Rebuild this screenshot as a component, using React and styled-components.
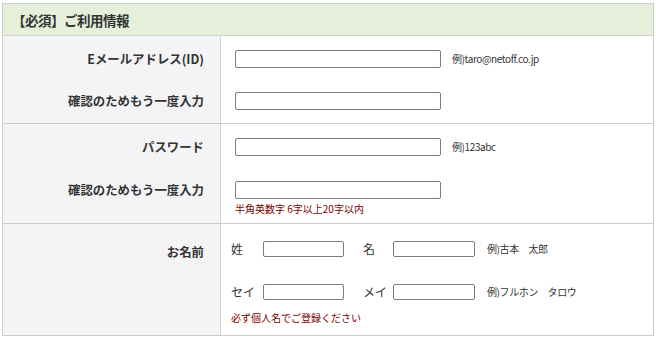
import React from "react";
import styled, { createGlobalStyle } from "styled-components";

const Global = createGlobalStyle`
  html, body { margin: 0; padding: 0; background: #fff; }
  body { font-family: "Noto Sans CJK JP", "Noto Sans", sans-serif; color: #333; }
  * { box-sizing: border-box; }
`;

const Table = styled.div`
  width: 652px;
  margin: 3px 0 0 2px;
  border: 1px solid #cccccc;
  border-bottom: none;
`;

const Header = styled.div`
  height: 32px;
  background: #e5efda;
  border-bottom: 1px solid #cfd6c8;
  padding-left: 9px;
  display: flex;
  align-items: center;
  font-size: 13.5px;
  font-weight: bold;
  color: #333;
  letter-spacing: -0.5px;
`;

const Row = styled.div`
  display: grid;
  grid-template-columns: 218px 1fr;
  height: ${(p) => p.$h}px;
  border-bottom: 1px solid #cccccc;
`;

const LabelCell = styled.div`
  background: #f4f3f6;
  border-right: 1px solid #d3d3d3;
  padding-right: 16px;
  display: flex;
  flex-direction: column;
  align-items: flex-end;
`;

const ContentCell = styled.div`
  background: #fff;
  padding-left: ${(p) => p.$pl ?? 14}px;
  display: flex;
  flex-direction: column;
`;

const Line = styled.div`
  height: ${(p) => p.$h}px;
  margin-top: ${(p) => p.$mt}px;
  display: flex;
  align-items: center;
  white-space: nowrap;
`;

const Label = styled.span`
  font-size: 12.4px;
  font-weight: bold;
  color: #333;
  line-height: 1;
`;

const TextInput = styled.input`
  width: ${(p) => p.$w}px;
  height: ${(p) => p.$h}px;
  border: 1px solid #7b7b7b;
  border-radius: 2px;
  background: #fff;
  padding: 0 3px;
  margin: 0;
  outline: none;
  font-size: 12px;
`;

const Example = styled.span`
  font-size: 10px;
  color: #333;
  margin-left: ${(p) => p.$ml ?? 11}px;
  line-height: 1;
  letter-spacing: -0.4px;
`;

const Note = styled.span`
  font-size: 10px;
  color: #7a0000;
  line-height: 1;
`;

const FieldName = styled.span`
  font-size: 12px;
  color: #333;
  width: ${(p) => p.$w}px;
  margin-left: ${(p) => p.$ml ?? 0}px;
  line-height: 1;
`;

export default function App() {
  return (
    <>
      <Global />
      <Table>
        <Header>【必須】ご利用情報</Header>

        <Row $h={88}>
          <LabelCell>
            <Line $h={18} $mt={14}><Label>Eメールアドレス(ID)</Label></Line>
            <Line $h={18} $mt={24}><Label>確認のためもう一度入力</Label></Line>
          </LabelCell>
          <ContentCell>
            <Line $h={18} $mt={14}>
              <TextInput $w={206} $h={18} />
              <Example>例)taro@netoff.co.jp</Example>
            </Line>
            <Line $h={18} $mt={24}>
              <TextInput $w={206} $h={18} />
            </Line>
          </ContentCell>
        </Row>

        <Row $h={100}>
          <LabelCell>
            <Line $h={18} $mt={14}><Label>パスワード</Label></Line>
            <Line $h={18} $mt={25}><Label>確認のためもう一度入力</Label></Line>
          </LabelCell>
          <ContentCell>
            <Line $h={18} $mt={14}>
              <TextInput $w={206} $h={18} />
              <Example>例)123abc</Example>
            </Line>
            <Line $h={18} $mt={25}>
              <TextInput $w={206} $h={18} />
            </Line>
            <Line $h={16} $mt={2}>
              <Note>半角英数字 6字以上20字以内</Note>
            </Line>
          </ContentCell>
        </Row>

        <Row $h={112}>
          <LabelCell>
            <Line $h={16} $mt={20}><Label>お名前</Label></Line>
          </LabelCell>
          <ContentCell $pl={10}>
            <Line $h={16} $mt={17}>
              <FieldName $w={32}>姓</FieldName>
              <TextInput $w={81} $h={16} />
              <FieldName $w={30} $ml={19}>名</FieldName>
              <TextInput $w={82} $h={16} />
              <Example $ml={12}>例)古本　太郎</Example>
            </Line>
            <Line $h={16} $mt={27}>
              <FieldName $w={32}>セイ</FieldName>
              <TextInput $w={81} $h={16} />
              <FieldName $w={30} $ml={19}>メイ</FieldName>
              <TextInput $w={82} $h={16} />
              <Example $ml={12}>例)フルホン　タロウ</Example>
            </Line>
            <Line $h={16} $mt={10}>
              <Note>必ず個人名でご登録ください</Note>
            </Line>
          </ContentCell>
        </Row>
      </Table>
    </>
  );
}
